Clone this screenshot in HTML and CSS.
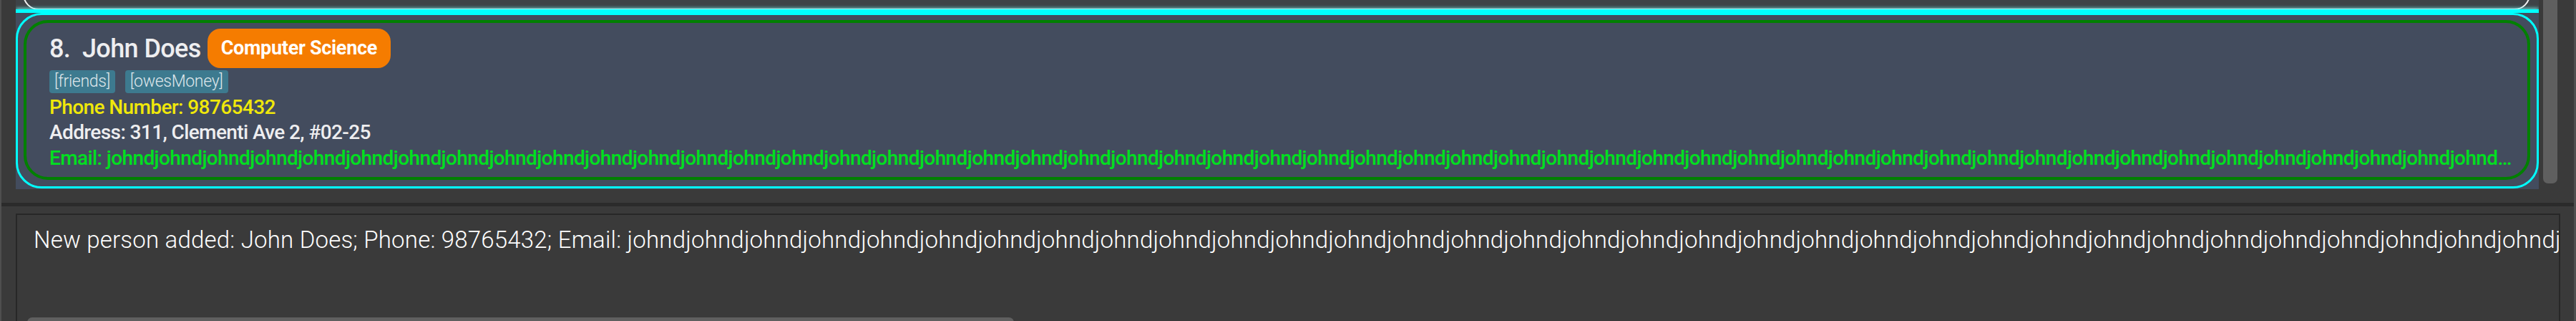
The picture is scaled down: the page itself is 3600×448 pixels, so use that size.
FILE: index.html
```html
<!DOCTYPE html>
<html>
<head>
<meta charset="utf-8">
<link rel="stylesheet" href="styles.css">
</head>
<body>
<div class="app">
  <div class="list-area">
    <div class="panel">
      <div class="prev-cell">
        <div class="prev-card"></div>
        <div class="prev-line"></div>
      </div>
      <div class="card-outer">
        <div class="card-inner">
          <div class="name-row">
            <span class="name">8.&nbsp; John Does</span>
            <span class="badge">Computer Science</span>
          </div>
          <div class="tags">
            <span class="tag">[friends]</span>
            <span class="tag">[owesMoney]</span>
          </div>
          <div class="line phone">Phone Number: 98765432</div>
          <div class="line address">Address: 311, Clementi Ave 2, #02-25</div>
          <div class="line email" id="email">Email: johnd</div>
        </div>
      </div>
    </div>
    <div class="vscroll"><div class="vthumb"></div></div>
  </div>
  <div class="separator"></div>
  <div class="result-area">
    <div class="result-box">
      <div class="result-text" id="result">New person added: John Does; Phone: 98765432; Email: johnd</div>
      <div class="hscroll"><div class="hthumb"></div></div>
    </div>
  </div>
</div>
<script>
  var j = "";
  for (var i = 0; i < 140; i++) j += "johnd";
  document.getElementById("email").textContent = "Email: " + j;
  document.getElementById("result").textContent = "New person added: John Does; Phone: 98765432; Email: " + j;
</script>
</body>
</html>
```

FILE: styles.css
```css
html, body {
  margin: 0;
  padding: 0;
  width: 3600px;
  height: 448px;
  overflow: hidden;
  background: #3a3a3a;
}

.app {
  width: 3600px;
  height: 470px;
  box-sizing: border-box;
  border-left: 2px solid #4f4f4f;
  border-right: 3px solid #4f4f4f;
  display: flex;
  flex-direction: column;
  background: #3a3a3a;
}

.list-area {
  height: 283px;
  display: flex;
  flex-direction: row;
  padding-left: 20px;
  flex: none;
}

.panel {
  width: 3526px;
  height: 264px;
  background: #434c5e;
  display: flex;
  flex-direction: column;
  flex: none;
}

.prev-cell {
  height: 18px;
  background: #3e4347;
  overflow: hidden;
  flex: none;
  position: relative;
}

.prev-card {
  height: 40px;
  margin-top: -30px;
  margin-left: 10px;
  margin-right: 12px;
  border: 2px solid #f2f2f2;
  border-radius: 28px;
}

.prev-line {
  position: absolute;
  left: 0;
  right: 0;
  top: 13px;
  height: 5px;
  background: #00ffff;
  box-shadow: 0 -2px 4px rgba(120, 255, 255, 0.7);
}

.card-outer {
  height: 245px;
  box-sizing: border-box;
  border: 3px solid #00ffff;
  border-radius: 36px;
  padding: 7px 9px 9px 8px;
  flex: none;
}

.card-inner {
  height: 223px;
  box-sizing: border-box;
  border: 4px solid #008000;
  border-radius: 34px;
  padding: 8px 18px 0 32px;
  display: flex;
  flex-direction: column;
  font-family: Roboto, "Liberation Sans", sans-serif;
}

.name-row {
  display: flex;
  align-items: center;
  height: 55px;
  gap: 9px;
}

.name {
  font-size: 36px;
  font-weight: 500;
  color: #eeeef0;
  letter-spacing: -0.6px;
}

.badge {
  background: #f57c00;
  color: #ffffff;
  font-weight: 700;
  font-size: 27px;
  height: 55px;
  line-height: 55px;
  padding: 0 19px;
  border-radius: 18px;
  letter-spacing: -0.3px;
}

.tags {
  display: flex;
  gap: 14px;
  margin-top: 3px;
}

.tag {
  background: #3d7a8f;
  color: #dfe6ea;
  font-size: 23px;
  font-weight: 300;
  height: 32px;
  line-height: 32px;
  padding: 0 7px;
  border-radius: 4px;
  letter-spacing: -0.3px;
}

.line {
  font-size: 28px;
  font-weight: 500;
  line-height: 35px;
  white-space: nowrap;
  overflow: hidden;
  text-overflow: ellipsis;
  letter-spacing: -0.6px;
}

.phone {
  color: #f0e80a;
  margin-top: 2px;
}

.address {
  color: #eeeef0;
}

.email {
  color: #00e020;
  margin-top: 1px;
}

.vscroll {
  width: 20px;
  margin-left: 6px;
  flex: none;
}

.vthumb {
  height: 256px;
  background: #5f5f5f;
  border-radius: 0 0 7px 7px;
}

.separator {
  height: 5px;
  background: #2b2b2b;
  flex: none;
}

.result-area {
  padding: 10px 19px 0 20px;
  flex: 1;
  display: flex;
}

.result-box {
  flex: 1;
  border: 2px solid #272727;
  background: #3a3a3a;
  display: flex;
  flex-direction: column;
  overflow: hidden;
}

.result-text {
  font-family: Roboto, "Liberation Sans", sans-serif;
  font-weight: 300;
  font-size: 33px;
  color: #ffffff;
  white-space: nowrap;
  overflow: hidden;
  padding: 15px 0 0 23px;
  line-height: 40px;
  height: 127px;
  box-sizing: border-box;
  letter-spacing: 0.2px;
}

.hscroll {
  padding-left: 14px;
  margin-top: 16px;
}

.hthumb {
  width: 1379px;
  height: 14px;
  background: #5f5f5f;
  border-radius: 7px 7px 0 0;
}
```
